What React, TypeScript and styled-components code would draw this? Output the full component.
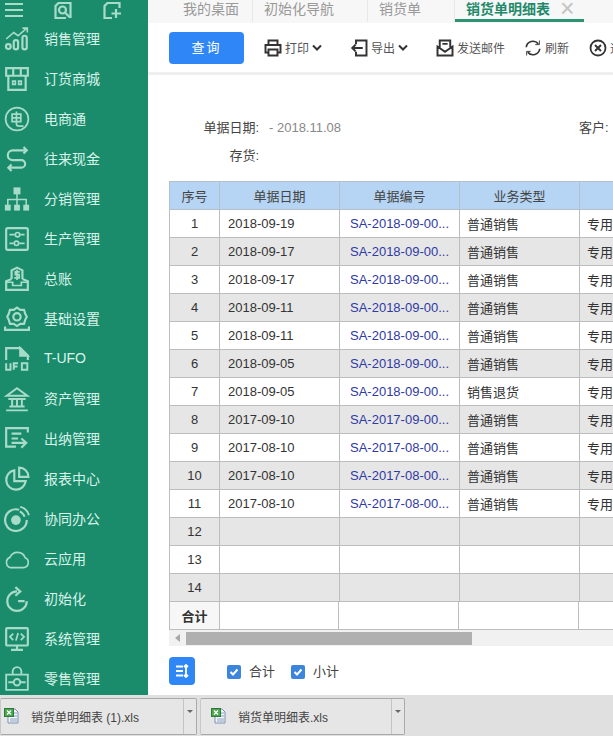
import styled, { createGlobalStyle } from "styled-components";
import { ReactNode } from "react";

const GlobalStyle = createGlobalStyle`
  html, body {
    margin: 0;
    padding: 0;
    overflow: hidden;
    background: #fff;
  }
  * { box-sizing: border-box; }
  body {
    font-family: "Liberation Sans", "Noto Sans CJK SC", sans-serif;
    color: #333;
  }
`;

const Page = styled.div`
  display: flex;
  flex-direction: column;
  width: 613px;
  height: 736px;
  overflow: hidden;
`;

const Main = styled.div`
  display: flex;
  height: 695px;
`;

const Sidebar = styled.nav`
  flex: 0 0 148px;
  background: #1a8c6c;
`;

const SideTop = styled.div`
  display: flex;
  height: 18px;
  padding: 2px 0 0 4px;
  color: #a9dbc9;

  > svg:nth-child(1) { margin-right: 30px; }
  > svg:nth-child(2) { margin-right: 31px; }
`;

const SideItem = styled.div`
  display: flex;
  align-items: center;
  height: 40px;
  padding-left: 4px;
  color: #a9dbc9;

  > svg { margin-top: 2px; }

  > span {
    margin-left: 14px;
    font-size: 14px;
    color: #d9f3e9;
  }
`;

const Content = styled.div`
  flex: 1;
  min-width: 0;
  display: flex;
  flex-direction: column;
  overflow: hidden;
`;

const TabBar = styled.div`
  display: flex;
  height: 23px;
  background: #f7f7f7;
  font-size: 14px;
  color: #999;
`;

const Tab = styled.div<{ $w: number; $pad: number; $active?: boolean }>`
  display: flex;
  flex: 0 0 ${(p) => p.$w}px;
  height: 22px;
  line-height: 18px;
  padding-left: ${(p) => p.$pad}px;
  font-weight: ${(p) => (p.$active ? "bold" : "normal")};
  color: ${(p) => (p.$active ? "#1f8a6a" : "#999")};
  border-right: ${(p) => (p.$active ? "0" : "1px solid #e8e8e8")};
  border-bottom: ${(p) => (p.$active ? "3px solid #2b9272" : "0")};

  > i {
    margin-left: 10px;
    font-style: normal;
    font-weight: normal;
    font-size: 25px;
    line-height: 16px;
    color: #c4c4c4;
  }
`;

const Toolbar = styled.div`
  display: flex;
  align-items: center;
  height: 49px;
  padding-left: 21px;
  background: #fff;
  white-space: nowrap;
`;

const QueryButton = styled.div`
  flex: 0 0 75px;
  height: 32px;
  margin-right: 20px;
  border-radius: 4px;
  background: #2f86f6;
  color: #fff;
  font-size: 13px;
  letter-spacing: 2px;
  line-height: 31px;
  text-align: center;
`;

const ToolItem = styled.div<{ $gap: number }>`
  display: flex;
  flex: 0 0 auto;
  align-items: center;
  margin-right: ${(p) => p.$gap}px;
  font-size: 12px;
  color: #555;

  > svg:first-child { margin-right: 3px; color: #333; }
  > svg + span + svg { margin-left: 3px; color: #333; }
`;

const Strip = styled.div`
  height: 3px;
  background: #efefef;
`;

const Body = styled.div`
  flex: 1;
  padding: 0 0 0 21px;
  background: #fff;
  overflow: hidden;
`;

const FilterRow = styled.div<{ $top: number }>`
  display: flex;
  height: 28px;
  margin-top: ${(p) => p.$top}px;
  line-height: 28px;
  font-size: 13px;
  color: #444;
`;

const FilterLabel = styled.div`
  flex: 0 0 90px;
  text-align: right;
`;

const FilterValue = styled.div`
  flex: 0 0 320px;
  padding-left: 10px;
  font-size: 13px;
  color: #888;
`;

const Table = styled.table`
  width: 530px;
  margin-top: 11px;
  table-layout: fixed;
  border-collapse: collapse;
  font-size: 13px;
`;

const TotalTable = styled(Table)`
  width: 529px;
  margin-top: -1px;
`;

const Col = styled.col<{ $w: number }>`
  width: ${(p) => p.$w}px;
`;

const HeadCell = styled.th`
  height: 28px;
  padding: 0;
  background: #b6d4f3;
  border: 1px solid #b5bfc9;
  font-weight: normal;
  color: #444;
  white-space: nowrap;
  overflow: hidden;
`;

const Row = styled.tr<{ $grey: boolean }>`
  background: ${(p) => (p.$grey ? "#e6e6e6" : "#fff")};
`;

const Cell = styled.td<{ $center?: boolean; $link?: boolean; $pad?: number }>`
  height: 28px;
  padding: 0 0 0 ${(p) => p.$pad ?? 8}px;
  border: 1px solid #bdbdbd;
  text-align: ${(p) => (p.$center ? "center" : "left")};
  color: ${(p) => (p.$link ? "#2f3aa3" : "#333")};
  white-space: nowrap;
  overflow: hidden;
`;

const TotalCell = styled(Cell)`
  padding: 0;
  background: #f7f7f7;
  font-weight: bold;
  text-align: center;
`;

const BlankTotal = styled(Cell)`
  background: #fff;
`;

const ScrollTrack = styled.div`
  display: flex;
  align-items: center;
  height: 16px;
  background: #f1f1f1;
`;

const ScrollArrow = styled.div`
  width: 0;
  height: 0;
  margin: 0 6px 0 6px;
  border-top: 4px solid transparent;
  border-bottom: 4px solid transparent;
  border-right: 5px solid #a8a8a8;
`;

const ScrollThumb = styled.div`
  width: 286px;
  height: 13px;
  background: #b0b0b0;
`;

const Actions = styled.div`
  display: flex;
  align-items: center;
  height: 28px;
  margin-top: 11px;
  font-size: 13px;
  color: #444;
`;

const SortButton = styled.div`
  display: flex;
  align-items: center;
  justify-content: center;
  width: 26px;
  height: 28px;
  margin-right: 32px;
  border-radius: 4px;
  background: #2f86f6;
  color: #fff;
`;

const Check = styled.label`
  display: flex;
  align-items: center;
  margin-right: 16px;

  > span { margin-left: 8px; margin-top: -1px; }
`;

const CheckBox = styled.div`
  display: flex;
  align-items: center;
  justify-content: center;
  width: 14px;
  height: 14px;
  margin-top: 1px;
  border-radius: 2px;
  background: #3d84dc;
  color: #fff;
`;

const BottomBar = styled.div`
  display: flex;
  height: 41px;
  padding-top: 3px;
  background: #e0e0e0;
`;

const FileTab = styled.div<{ $w: number; $pad: number }>`
  display: flex;
  flex: 0 0 ${(p) => p.$w}px;
  height: 37px;
  margin-right: 3px;
  padding-left: ${(p) => p.$pad}px;
  background: #e6e6e6;
  border: 1px solid #a9a9a9;
  border-left-color: #c8c8c8;
  border-radius: 2px;
  font-size: 12px;
  color: #444;
  white-space: nowrap;
`;

const FileIconWrap = styled.div`
  padding-top: 8px;
`;

const FileName = styled.div`
  flex: 1;
  margin-left: 11px;
  padding-top: 1px;
  line-height: 37px;
`;

const FileArrow = styled.div`
  display: flex;
  flex: 0 0 13px;
  justify-content: center;
  padding-top: 11px;
  border-left: 1px solid #c4c4c4;

  &::after {
    content: "";
    width: 0;
    height: 0;
    border-left: 3px solid transparent;
    border-right: 3px solid transparent;
    border-top: 3px solid #666;
  }
`;

function Ico({ children, size = 26 }: { children: ReactNode; size?: number }) {
  return (
    <svg width={size} height={size} viewBox="0 0 24 24" fill="none" stroke="currentColor" strokeWidth="2">
      {children}
    </svg>
  );
}

const menu: { label: string; icon: ReactNode }[] = [
  {
    label: "销售管理",
    icon: (
      <>
        <circle cx="4" cy="19" r="2.2" />
        <rect x="9" y="13" width="4" height="8.5" rx="2" />
        <rect x="17" y="9" width="4" height="12.5" rx="2" />
        <path d="M2 12 L9 6 L13 9 L21 2 M17 2 H21.5 V6" strokeWidth="1.5" />
      </>
    ),
  },
  {
    label: "订货商城",
    icon: (
      <>
        <path d="M2 2 H22 V9 H2 Z M8.5 2 V9 M15.5 2 V9 M4 9 V22 H20 V9" />
        <path d="M8 14 H10.5 V17 H8 Z M13.5 14 H16 V17 H13.5 Z" strokeWidth="1.5" />
      </>
    ),
  },
  {
    label: "电商通",
    icon: (
      <>
        <circle cx="12" cy="12" r="10.5" strokeWidth="1.6" />
        <path d="M7.5 7.5 H15.5 V14.5 H7.5 Z M7.5 11 H15.5 M11.5 5 V16.5 Q11.5 18.5 14 18.5 H18" strokeWidth="1.6" />
      </>
    ),
  },
  {
    label: "往来现金",
    icon: (
      <path d="M18 1 L21 4 L18 7 M20 4 H8 A4.5 4.5 0 0 0 8 13 H16 A3.5 3.5 0 0 1 16 20 H4.5 M7 17 L4 20 L7 23" />
    ),
  },
  {
    label: "分销管理",
    icon: (
      <g strokeWidth="1.4">
        <rect x="9.5" y="2" width="5" height="5" fill="currentColor" />
        <path d="M12 7 V18 M3.5 18 V12.5 H20.5 V18" />
        <rect x="1.5" y="18" width="4" height="4" fill="currentColor" />
        <rect x="10" y="18" width="4" height="4" fill="currentColor" />
        <rect x="18.5" y="18" width="4" height="4" fill="currentColor" />
      </g>
    ),
  },
  {
    label: "生产管理",
    icon: (
      <>
        <rect x="2" y="2" width="20" height="20" rx="1.5" />
        <path d="M5 8 H10 M15 8 H19 M5 16 H9 M14 16 H19" strokeWidth="1.6" />
        <circle cx="12.5" cy="8" r="2" strokeWidth="1.6" />
        <circle cx="11.5" cy="16" r="2" strokeWidth="1.6" />
      </>
    ),
  },
  {
    label: "总账",
    icon: (
      <>
        <path d="M7 12 V4 L12 1.5 L17 4 V12 M7 12 L2 14 V22 H22 V14 L17 12" />
        <path d="M2 15 H8 V18 H16 V15 H22 M14.5 5.5 H10.5 V8 H14 V11 H9.5 M12 3.5 V13" strokeWidth="1.6" />
      </>
    ),
  },
  {
    label: "基础设置",
    icon: (
      <>
        <path d="M12 1.5 L15 3.5 L18.5 3.5 L19.5 7 L21 10 L19.5 13 L18.5 16.5 L15 16.5 L12 18.5 L9 16.5 L5.5 16.5 L4.5 13 L3 10 L4.5 7 L5.5 3.5 L9 3.5 Z" />
        <circle cx="12" cy="10" r="3.4" />
        <path d="M1 19 V22 H23 V19" />
      </>
    ),
  },
  {
    label: "T-UFO",
    icon: (
      <>
        <path d="M2 13 V2 H15 L22 9 V13" />
        <path d="M15 2 L22 9 H15 Z" fill="currentColor" />
        <path d="M2 16 V22 H6 V16 M9 22 V16 H13 M9 19 H12.5 M16.5 16 H21.5 V22 H16.5 Z" strokeWidth="1.8" />
      </>
    ),
  },
  {
    label: "资产管理",
    icon: (
      <>
        <path d="M2.5 9 L12 2 L21.5 9 Z M4 12 H20 M2 22.5 H22" strokeWidth="1.8" />
        <path d="M7.5 12 V19 M12 12 V19 M16.5 12 V19 M5 19 H19" strokeWidth="1.8" />
      </>
    ),
  },
  {
    label: "出纳管理",
    icon: (
      <path d="M22 6 V2 H2 V19 H11 M7 7 H16 M7 11.5 H13 M7 15.5 H19 M16 11.5 L20.5 15.5 L16 20" />
    ),
  },
  {
    label: "报表中心",
    icon: (
      <>
        <path d="M9.5 4 A9 9 0 1 0 20 14 H9.5 Z" />
        <path d="M14 1.5 A8.5 8.5 0 0 1 22.5 10 H14 Z" />
      </>
    ),
  },
  {
    label: "协同办公",
    icon: (
      <>
        <circle cx="11" cy="13" r="4.5" fill="currentColor" stroke="none" />
        <path d="M14 3.5 A10 10 0 1 0 21 13" strokeWidth="2" />
        <path d="M15 0.8 A11 11 0 0 1 23 8.5 M14.5 5 A8 8 0 0 1 19 10" strokeWidth="1.8" />
      </>
    ),
  },
  {
    label: "云应用",
    icon: <path d="M6 20 H18 A4.8 4.8 0 0 0 19.5 10.8 A7.5 7.5 0 0 0 5.5 10.5 A5 5 0 0 0 6 20 Z" strokeWidth="1.5" />,
  },
  {
    label: "初始化",
    icon: (
      <path d="M12 5 A9 9 0 1 0 21 14 M10.5 1 L15 5 L10.5 9 M13 14 H19" strokeWidth="2" />
    ),
  },
  {
    label: "系统管理",
    icon: (
      <>
        <rect x="2" y="2" width="20" height="16" rx="1" />
        <path d="M12 18 V22 M6.5 22 H17.5" />
        <path d="M8.5 7 L5.5 10 L8.5 13 M15.5 7 L18.5 10 L15.5 13 M13 6.5 L11 13.5" strokeWidth="1.6" />
      </>
    ),
  },
  {
    label: "零售管理",
    icon: (
      <>
        <path d="M2 8 H22 V22 H2 Z M8 8 V5 A4 4 0 0 1 16 5 V8" strokeWidth="1.7" />
        <circle cx="12" cy="15" r="3" strokeWidth="1.7" />
        <path d="M9 15 H4 M15 15 H20" strokeWidth="1.7" />
      </>
    ),
  },
];

const rows = [
  ["2018-09-19", "SA-2018-09-00...", "普通销售"],
  ["2018-09-17", "SA-2018-09-00...", "普通销售"],
  ["2018-09-17", "SA-2018-09-00...", "普通销售"],
  ["2018-09-11", "SA-2018-09-00...", "普通销售"],
  ["2018-09-11", "SA-2018-09-00...", "普通销售"],
  ["2018-09-05", "SA-2018-09-00...", "普通销售"],
  ["2018-09-05", "SA-2018-09-00...", "销售退货"],
  ["2017-09-10", "SA-2017-09-00...", "普通销售"],
  ["2017-08-10", "SA-2017-08-00...", "普通销售"],
  ["2017-08-10", "SA-2017-08-00...", "普通销售"],
  ["2017-08-10", "SA-2017-08-00...", "普通销售"],
];

function Chevron() {
  return (
    <svg width="10" height="8" viewBox="0 0 10 8" fill="none" stroke="currentColor" strokeWidth="2">
      <path d="M1 1.5 L5 5.5 L9 1.5" />
    </svg>
  );
}

function ExcelIcon() {
  return (
    <svg width="17" height="18" viewBox="0 0 17 18">
      <path d="M5 2 H12 L15 5 V16 H5 Z" fill="#f3f6fb" stroke="#7c8fb0" />
      <path d="M11 6 H14 M11 9 H14 M7 12 H14 M7 14 H14" stroke="#8aa0c4" />
      <rect x="1.5" y="1.5" width="9" height="8" fill="#4ea64e" stroke="#2d7a3a" />
      <path d="M4 3.5 L8 7.5 M8 3.5 L4 7.5" stroke="#fff" strokeWidth="1.2" />
    </svg>
  );
}

function Tick() {
  return (
    <svg width="10" height="10" viewBox="0 0 10 10" fill="none" stroke="currentColor" strokeWidth="2">
      <path d="M1.5 5 L4 7.5 L8.5 2.5" />
    </svg>
  );
}

export default function App() {
  return (
    <Page>
      <GlobalStyle />
      <Main>
        <Sidebar>
          <SideTop>
            <svg width="20" height="16" viewBox="0 0 20 16" fill="none" stroke="currentColor" strokeWidth="2">
              <path d="M1 2 H19 M1 8 H19 M1 14 H19" />
            </svg>
            <svg width="18" height="17" viewBox="0 0 18 17" fill="none" stroke="currentColor" strokeWidth="2.2">
              <path d="M12 16 H1.5 V4 L4.5 1 H16.5 V16" />
              <circle cx="8.5" cy="8" r="3.5" />
              <path d="M11 10.5 L16 15.5" />
            </svg>
            <svg width="19" height="17" viewBox="0 0 19 17" fill="none" stroke="currentColor" strokeWidth="2.2">
              <path d="M9 16 H1.5 V4 L4.5 1 H16.5 V6" />
              <path d="M13 7 V16 M8.5 11.5 H18" />
            </svg>
          </SideTop>
          {menu.map((m) => (
            <SideItem key={m.label}>
              <Ico>{m.icon}</Ico>
              <span>{m.label}</span>
            </SideItem>
          ))}
        </Sidebar>
        <Content>
          <TabBar>
            <Tab $w={105} $pad={35}>我的桌面</Tab>
            <Tab $w={115} $pad={11}>初始化导航</Tab>
            <Tab $w={87} $pad={11}>销货单</Tab>
            <Tab $w={129} $pad={11} $active>
              销货单明细表<i>×</i>
            </Tab>
          </TabBar>
          <Toolbar>
            <QueryButton>查询</QueryButton>
            <ToolItem $gap={28}>
              <Ico size={18}>
                <path d="M6 7 V2 H18 V7 M6 18 H2 V8 H22 V18 H18 M6 14 H18 V22 H6 Z" strokeWidth="2.6" />
              </Ico>
              <span>打印</span>
              <Chevron />
            </ToolItem>
            <ToolItem $gap={28}>
              <Ico size={18}>
                <path d="M8 7 V2 H22 V22 H8 V17 M17 12 H3 M7.5 7.5 L3 12 L7.5 16.5" strokeWidth="2.6" />
              </Ico>
              <span>导出</span>
              <Chevron />
            </ToolItem>
            <ToolItem $gap={19}>
              <Ico size={18}>
                <path d="M5 11 V2 H19 V11 M2 10 V22 H22 V10 L12 17 Z M8.5 6.5 H15.5" strokeWidth="2.6" />
              </Ico>
              <span>发送邮件</span>
            </ToolItem>
            <ToolItem $gap={20}>
              <Ico size={18}>
                <path d="M3 11 A9 9 0 0 1 19 6.5 M21 13 A9 9 0 0 1 5 17.5" strokeWidth="2.2" />
                <path d="M20.5 2 V7.5 H15 M3.5 22 V16.5 H9" strokeWidth="1.2" />
              </Ico>
              <span>刷新</span>
            </ToolItem>
            <ToolItem $gap={0}>
              <Ico size={18}>
                <circle cx="12" cy="12" r="10" strokeWidth="2.4" />
                <path d="M8 8 L16 16 M16 8 L8 16" strokeWidth="2.6" />
              </Ico>
              <span>退出</span>
            </ToolItem>
          </Toolbar>
          <Strip />
          <Body>
            <FilterRow $top={39}>
              <FilterLabel>单据日期:</FilterLabel>
              <FilterValue>- 2018.11.08</FilterValue>
              <span>客户:</span>
            </FilterRow>
            <FilterRow $top={0}>
              <FilterLabel>存货:</FilterLabel>
            </FilterRow>
            <Table>
              <colgroup>
                <Col $w={50} />
                <Col $w={120} />
                <Col $w={120} />
                <Col $w={120} />
                <Col $w={120} />
              </colgroup>
              <thead>
                <tr>
                  <HeadCell>序号</HeadCell>
                  <HeadCell>单据日期</HeadCell>
                  <HeadCell>单据编号</HeadCell>
                  <HeadCell>业务类型</HeadCell>
                  <HeadCell>销售类型</HeadCell>
                </tr>
              </thead>
              <tbody>
                {Array.from({ length: 14 }, (_, i) => {
                  const r = rows[i];
                  return (
                    <Row key={i} $grey={i % 2 === 1}>
                      <Cell $center $pad={0}>{i + 1}</Cell>
                      <Cell>{r?.[0]}</Cell>
                      <Cell $link $pad={10}>{r?.[1]}</Cell>
                      <Cell $pad={7}>{r?.[2]}</Cell>
                      <Cell $pad={7}>{r ? "专用发票" : ""}</Cell>
                    </Row>
                  );
                })}
              </tbody>
            </Table>
            <TotalTable>
              <colgroup>
                <Col $w={50} />
                <Col $w={119} />
                <Col $w={120} />
                <Col $w={120} />
                <Col $w={120} />
              </colgroup>
              <tbody>
                <tr>
                  <TotalCell>合计</TotalCell>
                  <BlankTotal />
                  <BlankTotal />
                  <BlankTotal />
                  <BlankTotal />
                </tr>
              </tbody>
            </TotalTable>
            <ScrollTrack>
              <ScrollArrow />
              <ScrollThumb />
            </ScrollTrack>
            <Actions>
              <SortButton>
                <svg width="14" height="14" viewBox="0 0 14 14" fill="none" stroke="currentColor" strokeWidth="1.8">
                  <path d="M1 2.5 H8 M1 7 H8 M1 11.5 H8 M11 1 V13 M9 3 L11 1 L13 3 M9 11 L11 13 L13 11" />
                </svg>
              </SortButton>
              <Check>
                <CheckBox>
                  <Tick />
                </CheckBox>
                <span>合计</span>
              </Check>
              <Check>
                <CheckBox>
                  <Tick />
                </CheckBox>
                <span>小计</span>
              </Check>
            </Actions>
          </Body>
        </Content>
      </Main>
      <BottomBar>
        <FileTab $w={197} $pad={2}>
          <FileIconWrap>
            <ExcelIcon />
          </FileIconWrap>
          <FileName>销货单明细表 (1).xls</FileName>
          <FileArrow />
        </FileTab>
        <FileTab $w={205} $pad={9}>
          <FileIconWrap>
            <ExcelIcon />
          </FileIconWrap>
          <FileName>销货单明细表.xls</FileName>
          <FileArrow />
        </FileTab>
      </BottomBar>
    </Page>
  );
}
